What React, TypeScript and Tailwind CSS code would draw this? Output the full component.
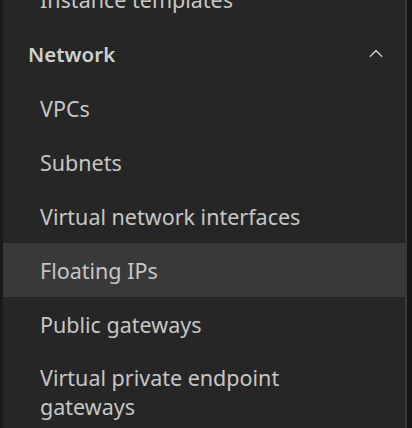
const items = [
  "VPCs",
  "Subnets",
  "Virtual network interfaces",
  "Floating IPs",
  "Public gateways",
  "Virtual private endpoint gateways",
];

export default function App() {
  return (
    <div
      className="flex h-[428px] w-[412px] overflow-hidden bg-[#161616]"
      style={{ fontFamily: '"Noto Sans", "Open Sans", sans-serif' }}
    >
      <div className="w-[3px] shrink-0 bg-[#1a1a1a]" />
      <nav className="flex w-[402px] shrink-0 flex-col bg-[#262626] text-[#c6c6c6]">
        <div className="-mt-[27px] flex h-[54px] shrink-0 items-center pl-[37px] text-[21.5px]">
          Instance templates
        </div>
        <div className="flex h-[54px] shrink-0 items-center justify-between pl-[25px] pr-[20px] text-[20.5px] font-semibold text-[#d0d0d0]">
          <span>Network</span>
          <svg width="18" height="18" viewBox="0 0 16 16" fill="none">
            <path d="M2.5 10.5 8 5l5.5 5.5" stroke="#c6c6c6" strokeWidth="1.3" />
          </svg>
        </div>
        {items.map((label) => (
          <div
            key={label}
            className={`flex min-h-[54px] shrink-0 items-center py-[12px] pl-[37px] pr-[40px] text-[21.5px] leading-[29px] ${
              label === "Floating IPs" ? "bg-[#393939]" : ""
            }`}
          >
            {label}
          </div>
        ))}
      </nav>
      <div className="w-[2px] shrink-0 bg-[#393939]" />
    </div>
  );
}
